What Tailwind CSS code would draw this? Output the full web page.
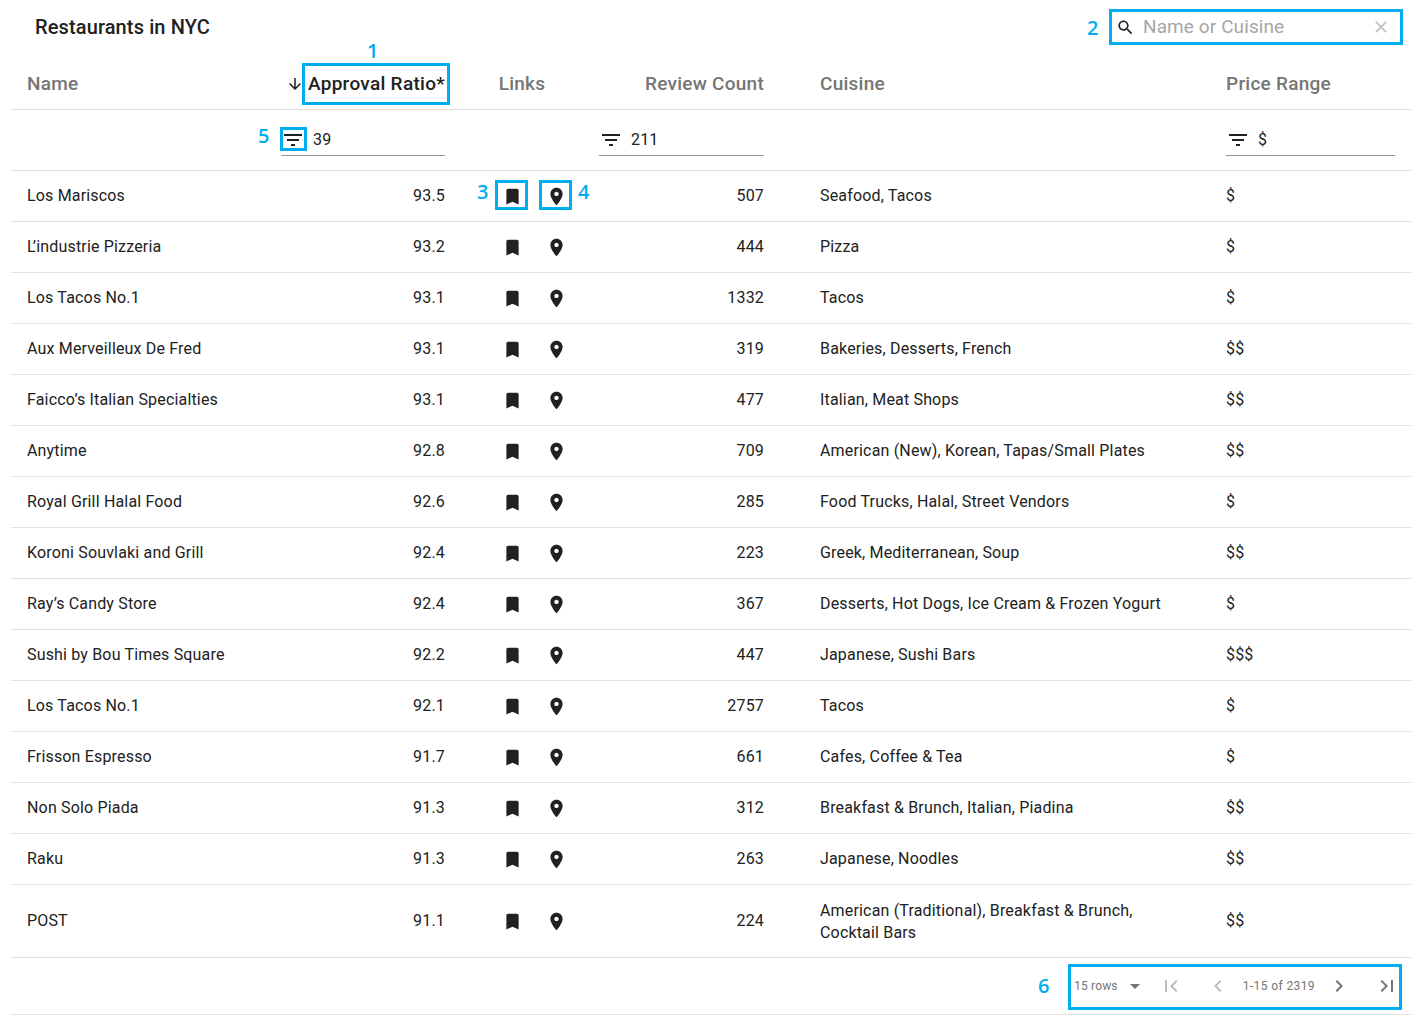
<!DOCTYPE html>
<html lang="en">
<head>
    <meta charset="UTF-8">
    <title>Restaurants in NYC</title>
    <script src="https://cdn.jsdelivr.net/npm/@tailwindcss/browser@4"></script>
</head>
<body class="bg-white font-['Roboto',sans-serif] text-[#212121] overflow-hidden">
    <svg class="hidden">
        <symbol id="bookmark" viewBox="0 0 24 24"><path d="M17 3H7c-1.1 0-1.99.9-1.99 2L5 21l7-3 7 3V5c0-1.1-.9-2-2-2z"/></symbol>
        <symbol id="pin" viewBox="0 0 24 24"><path d="M12 2C8.13 2 5 5.13 5 9c0 5.25 7 13 7 13s7-7.75 7-13c0-3.87-3.13-7-7-7zm0 9.5c-1.38 0-2.5-1.12-2.5-2.5s1.12-2.5 2.5-2.5 2.5 1.12 2.5 2.5-1.12 2.5-2.5 2.5z"/></symbol>
        <symbol id="filter" viewBox="0 0 24 24"><path d="M10 18h4v-2h-4v2zM3 6v2h18V6H3zm3 7h12v-2H6v2z"/></symbol>
    </svg>

    <div class="relative w-[1415px] h-[1022px] pl-[11px] pr-[4px]">
        <!-- Toolbar -->
        <div class="flex items-center justify-between h-[54px] pl-[24px] pr-[1px]">
            <h1 class="text-[20px] font-medium leading-none tracking-[0.12px]">Restaurants in NYC</h1>
            <div class="flex items-center w-[294px] h-[36px] pl-[7px] pr-[12px] mr-[7px]">
                <svg class="w-[19px] h-[19px] fill-[#212121]" viewBox="0 0 24 24"><path d="M15.5 14h-.79l-.28-.27C15.41 12.59 16 11.11 16 9.5 16 5.91 13.09 3 9.5 3S3 5.91 3 9.5 5.91 16 9.5 16c1.61 0 3.09-.59 4.23-1.57l.27.28v.79l5 4.99L20.49 19l-4.99-5zm-6 0C7.01 14 5 11.99 5 9.5S7.01 5 9.5 5 14 7.01 14 9.5 11.99 14 9.5 14z"/></svg>
                <span class="ml-[8px] flex-1 text-[19px] tracking-[0.1px] text-[#a6a6a6]">Name or Cuisine</span>
                <svg class="w-[20px] h-[20px] fill-[#bdbdbd]" viewBox="0 0 24 24"><path d="M19 6.41L17.59 5 12 10.59 6.41 5 5 6.41 10.59 12 5 17.59 6.41 19 12 13.41 17.59 19 19 17.59 13.41 12z"/></svg>
            </div>
        </div>

        <!-- Table -->
        <table class="table-fixed w-[1400px] border-collapse text-[16px] tracking-[0.17px]">
            <colgroup>
                <col class="w-[254px]"><col class="w-[196px]"><col class="w-[122px]"><col class="w-[221px]"><col class="w-[406px]"><col class="w-[201px]">
            </colgroup>
            <thead class="text-[19px] font-medium text-[#757575]">
                <tr class="h-[55px] border-b border-[#e0e0e0] tracking-[0.25px]">
                    <th class="pl-[16px] pt-[5px] text-left font-medium">Name</th>
                    <th class="pr-[16px] pt-[5px] font-medium text-[#212121]">
                        <div class="flex items-center justify-end">
                            <svg class="w-[18px] h-[18px] fill-[#212121] mr-[4px]" viewBox="0 0 24 24"><path d="M20 12l-1.41-1.41L13 16.17V4h-2v12.17l-5.58-5.59L4 12l8 8 8-8z"/></svg>
                            <span class="tracking-[0.3px]">Approval Ratio*</span>
                        </div>
                    </th>
                    <th class="pt-[5px] text-center font-medium">Links</th>
                    <th class="pr-[40px] pt-[5px] text-right font-medium">Review Count</th>
                    <th class="pl-[16px] pt-[5px] text-left font-medium">Cuisine</th>
                    <th class="pl-[16px] pt-[5px] text-left font-medium">Price Range</th>
                </tr>
                <tr class="h-[61px] border-b border-[#e0e0e0] text-[16px] font-normal text-[#212121]">
                    <td></td>
                    <td class="pl-[16px] pr-[16px]">
                        <div class="flex items-center h-[32px] pt-[2px] border-b border-[#949494]">
                            <svg class="w-[24px] h-[24px] fill-[#212121]"><use href="#filter"/></svg>
                            <span class="ml-[8px]">39</span>
                        </div>
                    </td>
                    <td></td>
                    <td class="pl-[16px] pr-[40px]">
                        <div class="flex items-center h-[32px] pt-[2px] border-b border-[#949494]">
                            <svg class="w-[24px] h-[24px] fill-[#212121]"><use href="#filter"/></svg>
                            <span class="ml-[8px]">211</span>
                        </div>
                    </td>
                    <td></td>
                    <td class="pl-[16px] pr-[16px]">
                        <div class="flex items-center h-[32px] pt-[2px] border-b border-[#949494]">
                            <svg class="w-[24px] h-[24px] fill-[#212121]"><use href="#filter"/></svg>
                            <span class="ml-[8px]">$</span>
                        </div>
                    </td>
                </tr>
            </thead>
            <tbody>
                <tr class="h-[51px] border-b border-[#e0e0e0]"><td class="pl-[16px]">Los Mariscos</td><td class="pr-[16px] text-right">93.5</td><td><div class="flex gap-[23px] pl-[40.5px] pt-[2px]"><svg class="w-[21px] h-[21px] fill-[#212121]"><use href="#bookmark"/></svg><svg class="w-[21px] h-[21px] fill-[#212121]"><use href="#pin"/></svg></div></td><td class="pr-[40px] text-right">507</td><td class="pl-[16px]">Seafood, Tacos</td><td class="pl-[16px]">$</td></tr>
                <tr class="h-[51px] border-b border-[#e0e0e0]"><td class="pl-[16px]"><span class="tracking-[-2.8px]">L</span>’industrie Pizzeria</td><td class="pr-[16px] text-right">93.2</td><td><div class="flex gap-[23px] pl-[40.5px] pt-[2px]"><svg class="w-[21px] h-[21px] fill-[#212121]"><use href="#bookmark"/></svg><svg class="w-[21px] h-[21px] fill-[#212121]"><use href="#pin"/></svg></div></td><td class="pr-[40px] text-right">444</td><td class="pl-[16px]">Pizza</td><td class="pl-[16px]">$</td></tr>
                <tr class="h-[51px] border-b border-[#e0e0e0]"><td class="pl-[16px]">Los Tacos No.1</td><td class="pr-[16px] text-right">93.1</td><td><div class="flex gap-[23px] pl-[40.5px] pt-[2px]"><svg class="w-[21px] h-[21px] fill-[#212121]"><use href="#bookmark"/></svg><svg class="w-[21px] h-[21px] fill-[#212121]"><use href="#pin"/></svg></div></td><td class="pr-[40px] text-right">1332</td><td class="pl-[16px]">Tacos</td><td class="pl-[16px]">$</td></tr>
                <tr class="h-[51px] border-b border-[#e0e0e0]"><td class="pl-[16px]">Aux Merveilleux De Fred</td><td class="pr-[16px] text-right">93.1</td><td><div class="flex gap-[23px] pl-[40.5px] pt-[2px]"><svg class="w-[21px] h-[21px] fill-[#212121]"><use href="#bookmark"/></svg><svg class="w-[21px] h-[21px] fill-[#212121]"><use href="#pin"/></svg></div></td><td class="pr-[40px] text-right">319</td><td class="pl-[16px]">Bakeries, Desserts, French</td><td class="pl-[16px]">$$</td></tr>
                <tr class="h-[51px] border-b border-[#e0e0e0]"><td class="pl-[16px]">Faicco’s Italian Specialties</td><td class="pr-[16px] text-right">93.1</td><td><div class="flex gap-[23px] pl-[40.5px] pt-[2px]"><svg class="w-[21px] h-[21px] fill-[#212121]"><use href="#bookmark"/></svg><svg class="w-[21px] h-[21px] fill-[#212121]"><use href="#pin"/></svg></div></td><td class="pr-[40px] text-right">477</td><td class="pl-[16px]">Italian, Meat Shops</td><td class="pl-[16px]">$$</td></tr>
                <tr class="h-[51px] border-b border-[#e0e0e0]"><td class="pl-[16px]">Anytime</td><td class="pr-[16px] text-right">92.8</td><td><div class="flex gap-[23px] pl-[40.5px] pt-[2px]"><svg class="w-[21px] h-[21px] fill-[#212121]"><use href="#bookmark"/></svg><svg class="w-[21px] h-[21px] fill-[#212121]"><use href="#pin"/></svg></div></td><td class="pr-[40px] text-right">709</td><td class="pl-[16px]">American (New), Korean, Tapas/Small Plates</td><td class="pl-[16px]">$$</td></tr>
                <tr class="h-[51px] border-b border-[#e0e0e0]"><td class="pl-[16px]">Royal Grill Halal Food</td><td class="pr-[16px] text-right">92.6</td><td><div class="flex gap-[23px] pl-[40.5px] pt-[2px]"><svg class="w-[21px] h-[21px] fill-[#212121]"><use href="#bookmark"/></svg><svg class="w-[21px] h-[21px] fill-[#212121]"><use href="#pin"/></svg></div></td><td class="pr-[40px] text-right">285</td><td class="pl-[16px]">Food Trucks, Halal, Street Vendors</td><td class="pl-[16px]">$</td></tr>
                <tr class="h-[51px] border-b border-[#e0e0e0]"><td class="pl-[16px]">Koroni Souvlaki and Grill</td><td class="pr-[16px] text-right">92.4</td><td><div class="flex gap-[23px] pl-[40.5px] pt-[2px]"><svg class="w-[21px] h-[21px] fill-[#212121]"><use href="#bookmark"/></svg><svg class="w-[21px] h-[21px] fill-[#212121]"><use href="#pin"/></svg></div></td><td class="pr-[40px] text-right">223</td><td class="pl-[16px]">Greek, Mediterranean, Soup</td><td class="pl-[16px]">$$</td></tr>
                <tr class="h-[51px] border-b border-[#e0e0e0]"><td class="pl-[16px]">Ray’s Candy Store</td><td class="pr-[16px] text-right">92.4</td><td><div class="flex gap-[23px] pl-[40.5px] pt-[2px]"><svg class="w-[21px] h-[21px] fill-[#212121]"><use href="#bookmark"/></svg><svg class="w-[21px] h-[21px] fill-[#212121]"><use href="#pin"/></svg></div></td><td class="pr-[40px] text-right">367</td><td class="pl-[16px]">Desserts, Hot Dogs, Ice Cream &amp; Frozen Yogurt</td><td class="pl-[16px]">$</td></tr>
                <tr class="h-[51px] border-b border-[#e0e0e0]"><td class="pl-[16px]">Sushi by Bou Times Square</td><td class="pr-[16px] text-right">92.2</td><td><div class="flex gap-[23px] pl-[40.5px] pt-[2px]"><svg class="w-[21px] h-[21px] fill-[#212121]"><use href="#bookmark"/></svg><svg class="w-[21px] h-[21px] fill-[#212121]"><use href="#pin"/></svg></div></td><td class="pr-[40px] text-right">447</td><td class="pl-[16px]">Japanese, Sushi Bars</td><td class="pl-[16px]">$$$</td></tr>
                <tr class="h-[51px] border-b border-[#e0e0e0]"><td class="pl-[16px]">Los Tacos No.1</td><td class="pr-[16px] text-right">92.1</td><td><div class="flex gap-[23px] pl-[40.5px] pt-[2px]"><svg class="w-[21px] h-[21px] fill-[#212121]"><use href="#bookmark"/></svg><svg class="w-[21px] h-[21px] fill-[#212121]"><use href="#pin"/></svg></div></td><td class="pr-[40px] text-right">2757</td><td class="pl-[16px]">Tacos</td><td class="pl-[16px]">$</td></tr>
                <tr class="h-[51px] border-b border-[#e0e0e0]"><td class="pl-[16px]">Frisson Espresso</td><td class="pr-[16px] text-right">91.7</td><td><div class="flex gap-[23px] pl-[40.5px] pt-[2px]"><svg class="w-[21px] h-[21px] fill-[#212121]"><use href="#bookmark"/></svg><svg class="w-[21px] h-[21px] fill-[#212121]"><use href="#pin"/></svg></div></td><td class="pr-[40px] text-right">661</td><td class="pl-[16px]">Cafes, Coffee &amp; Tea</td><td class="pl-[16px]">$</td></tr>
                <tr class="h-[51px] border-b border-[#e0e0e0]"><td class="pl-[16px]">Non Solo Piada</td><td class="pr-[16px] text-right">91.3</td><td><div class="flex gap-[23px] pl-[40.5px] pt-[2px]"><svg class="w-[21px] h-[21px] fill-[#212121]"><use href="#bookmark"/></svg><svg class="w-[21px] h-[21px] fill-[#212121]"><use href="#pin"/></svg></div></td><td class="pr-[40px] text-right">312</td><td class="pl-[16px]">Breakfast &amp; Brunch, Italian, Piadina</td><td class="pl-[16px]">$$</td></tr>
                <tr class="h-[51px] border-b border-[#e0e0e0]"><td class="pl-[16px]">Raku</td><td class="pr-[16px] text-right">91.3</td><td><div class="flex gap-[23px] pl-[40.5px] pt-[2px]"><svg class="w-[21px] h-[21px] fill-[#212121]"><use href="#bookmark"/></svg><svg class="w-[21px] h-[21px] fill-[#212121]"><use href="#pin"/></svg></div></td><td class="pr-[40px] text-right">263</td><td class="pl-[16px]">Japanese, Noodles</td><td class="pl-[16px]">$$</td></tr>
                <tr class="h-[73px] border-b border-[#e0e0e0]"><td class="pl-[16px]">POST</td><td class="pr-[16px] text-right">91.1</td><td><div class="flex gap-[23px] pl-[40.5px] pt-[2px]"><svg class="w-[21px] h-[21px] fill-[#212121]"><use href="#bookmark"/></svg><svg class="w-[21px] h-[21px] fill-[#212121]"><use href="#pin"/></svg></div></td><td class="pr-[40px] text-right">224</td><td class="pl-[16px] pr-[40px] pt-[2px] leading-[22px]">American (Traditional), Breakfast &amp; Brunch, Cocktail Bars</td><td class="pl-[16px]">$$</td></tr>
            </tbody>
        </table>

        <!-- Pagination -->
        <div class="flex items-center justify-end w-[1400px] h-[57px] border-b border-[#e0e0e0] pr-[12px] text-[12px] tracking-[0.4px] text-[#757575]">
            <span class="tracking-[0.15px]">15 rows</span>
            <svg class="ml-[5px] w-[24px] h-[24px] fill-[#757575]" viewBox="0 0 24 24"><path d="M7 10l5 5 5-5z"/></svg>
            <svg class="ml-[12px] w-[24px] h-[24px] fill-[#bdbdbd]" viewBox="0 0 24 24"><path d="M18.41 16.59L13.82 12l4.59-4.59L17 6l-6 6 6 6zM6 6h2v12H6z"/></svg>
            <svg class="ml-[23px] w-[24px] h-[24px] fill-[#bdbdbd]" viewBox="0 0 24 24"><path d="M15.41 7.41L14 6l-6 6 6 6 1.41-1.41L10.83 12z"/></svg>
            <span class="ml-[13px]">1-15 of 2319</span>
            <svg class="ml-[12px] w-[24px] h-[24px] fill-[#757575]" viewBox="0 0 24 24"><path d="M10 6L8.59 7.41 13.17 12l-4.58 4.59L10 18l6-6z"/></svg>
            <svg class="ml-[24px] w-[24px] h-[24px] fill-[#757575]" viewBox="0 0 24 24"><path d="M5.59 7.41L10.18 12l-4.59 4.59L7 18l6-6-6-6zM16 6h2v12h-2z"/></svg>
        </div>

        <!-- Callout boxes -->
        <div class="absolute left-[302px] top-[63px] w-[148px] h-[42px] border-[3px] border-[#00aeef]"></div>
        <div class="absolute left-[1109px] top-[9px] w-[294px] h-[36px] border-[3px] border-[#00aeef]"></div>
        <div class="absolute left-[495px] top-[180px] w-[33px] h-[30px] border-[3px] border-[#00aeef]"></div>
        <div class="absolute left-[539px] top-[180px] w-[33px] h-[30px] border-[3px] border-[#00aeef]"></div>
        <div class="absolute left-[280px] top-[127px] w-[27px] h-[24px] border-[3px] border-[#00aeef]"></div>
        <div class="absolute left-[1068px] top-[964px] w-[334px] h-[46px] border-[3px] border-[#00aeef]"></div>

        <!-- Callout numbers -->
        <span class="absolute left-[367px] top-[38px] text-[20px] leading-[26px] font-semibold font-['Open_Sans',sans-serif] text-[#00aeef]">1</span>
        <span class="absolute left-[1087px] top-[15px] text-[20px] leading-[26px] font-semibold font-['Open_Sans',sans-serif] text-[#00aeef]">2</span>
        <span class="absolute left-[477px] top-[179px] text-[20px] leading-[26px] font-semibold font-['Open_Sans',sans-serif] text-[#00aeef]">3</span>
        <span class="absolute left-[578px] top-[179px] text-[20px] leading-[26px] font-semibold font-['Open_Sans',sans-serif] text-[#00aeef]">4</span>
        <span class="absolute left-[258px] top-[123px] text-[20px] leading-[26px] font-semibold font-['Open_Sans',sans-serif] text-[#00aeef]">5</span>
        <span class="absolute left-[1038px] top-[973px] text-[20px] leading-[26px] font-semibold font-['Open_Sans',sans-serif] text-[#00aeef]">6</span>
    </div>
</body>
</html>
